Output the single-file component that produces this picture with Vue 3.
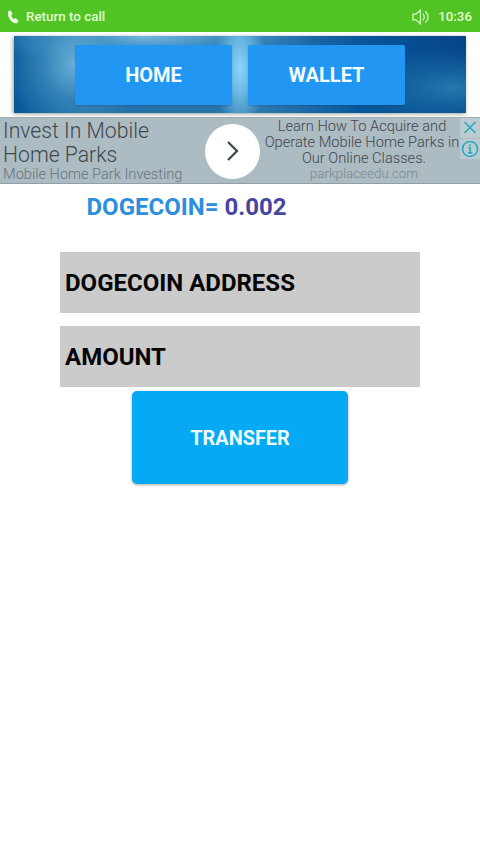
<script setup>
const tabs = ['HOME', 'WALLET']
const fields = ['DOGECOIN ADDRESS', 'AMOUNT']
</script>

<template>
  <div class="screen">
    <header class="status">
      <svg class="phone" viewBox="0 0 12 14"><path d="M1.2 1.2 3.8.4 5.5 4 4.2 5.4Q4.9 7.5 6.8 8.9L8.5 8.1 11.5 10.5 10.4 13.1Q6.8 14.2 3.6 10.6.1 6 1.2 1.2Z" /></svg>
      <span class="call">Return to call</span>
      <svg class="sound" viewBox="0 0 18 16"><path d="M1 5.3H3.7L8.4 1.2V14.8L3.7 10.7H1ZM11 4.7Q13.4 8 11 11.3M13.3 2.3Q19 8 13.3 13.7" /></svg>
      <span class="clock">10:36</span>
    </header>

    <nav class="banner">
      <button v-for="tab in tabs" :key="tab" class="tab">{{ tab }}</button>
    </nav>

    <section class="ad">
      <div class="ad-left">
        <div class="ad-title">Invest In Mobile<br />Home Parks</div>
        <div class="ad-sub">Mobile Home Park Investing</div>
      </div>
      <div class="arrow">
        <svg viewBox="0 0 14 22"><path d="M2 2 11 11 2 20" /></svg>
      </div>
      <div class="ad-right">
        <div>Learn How To Acquire and</div>
        <div>Operate Mobile Home Parks in</div>
        <div class="last">Our Online Classes.</div>
        <div class="url">parkplaceedu.com</div>
      </div>
      <div class="ad-marks">
        <svg viewBox="0 0 20 20"><path d="M4.5 4 15.5 15M15.5 4 4.5 15" /></svg>
        <svg viewBox="0 0 20 20"><circle cx="10" cy="10" r="7.5" /><path d="M8.5 8.8H10.2V13.7M8 13.9H12.3" /><path d="M10 5.3V7" /></svg>
      </div>
    </section>

    <main>
      <div class="balance">DOGECOIN= <span>0.002</span></div>
      <div v-for="field in fields" :key="field" class="field">{{ field }}</div>
      <button class="transfer">TRANSFER</button>
    </main>
  </div>
</template>

<style>
body {
  background: #fff;
}
</style>

<style scoped>
.screen {
  width: 480px;
  height: 854px;
  overflow: hidden;
  background: #fff;
  font-family: Roboto, "Liberation Sans", sans-serif;
}
button {
  border: 0;
  padding: 0;
  font-family: inherit;
}
svg {
  display: block;
  fill: none;
}
.status {
  display: flex;
  align-items: center;
  height: 32px;
  box-sizing: border-box;
  padding: 1px 8px 0 7px;
  background: #52c325;
  color: #e1fbd0;
  font-size: 13.4px;
  font-weight: 500;
  white-space: nowrap;
}
.phone {
  width: 12px;
  height: 14px;
  fill: #e9ffdf;
  margin-right: 7px;
}
.call {
  flex: 1;
}
.sound {
  width: 18px;
  height: 16px;
  stroke: #c9f5ae;
  stroke-width: 1.4;
  margin-right: 8px;
}
.clock {
  font-size: 13.3px;
}
.banner {
  display: flex;
  gap: 16px;
  width: 452px;
  height: 77px;
  box-sizing: border-box;
  margin: 4px 0 0 14px;
  padding: 9px 0 0 61px;
  background:
    radial-gradient(ellipse 26px 62px at 226px 33px, #8dd5fb 0%, #76c3edcc 45%, #4595c900 100%),
    radial-gradient(ellipse 70px 75px at 62px 28px, #6bb1d9 0%, #4796c499 48%, #1c6ca300 100%),
    radial-gradient(ellipse 170px 30px at 130px 0, #73b9df 0%, #4c9acb88 50%, #1c6ca300 100%),
    radial-gradient(ellipse 110px 40px at 440px 52px, #2478ad 0%, #1b70a899 45%, #0b559600 100%),
    linear-gradient(90deg, #07589a 0%, #226fa9 22%, #2b78b0 55%, #07559a 78%, #064488 100%);
  box-shadow: -1px 1px 4px #0006;
}
.tab {
  width: 157px;
  height: 60px;
  border-radius: 2px;
  background: #2196f3;
  color: #f3fcff;
  font-size: 20px;
  font-weight: 700;
  line-height: 60px;
  box-shadow: 0 1px 2px #0002;
}
.ad {
  display: flex;
  width: 480px;
  height: 67px;
  box-sizing: border-box;
  margin-top: 4px;
  border-top: 1px solid #a0abb0;
  border-bottom: 1px solid #929fa5;
  background: #adbbc2;
  color: #3e484d;
  font-weight: 300;
  white-space: nowrap;
}
.ad-left {
  width: 202px;
  padding-left: 3px;
}
.ad-title {
  padding-top: 1px;
  font-size: 21.2px;
  line-height: 24px;
}
.ad-sub {
  color: #65747c;
  font-size: 14.6px;
  line-height: 14px;
}
.arrow {
  display: flex;
  align-items: center;
  justify-content: center;
  width: 55px;
  height: 55px;
  margin-top: 6px;
  border-radius: 50%;
  background: #fff;
}
.arrow svg {
  width: 14px;
  height: 22px;
  margin-top: -1px;
  stroke: #414b50;
  stroke-width: 2.3;
}
.ad-right {
  width: 200px;
  margin: 0 -2px 0 2px;
  box-sizing: border-box;
  text-align: center;
  font-size: 14.65px;
  line-height: 16px;
}
.last {
  padding-left: 4px;
}
.url {
  padding-left: 4px;
  color: #7b898f;
  font-size: 13.4px;
  line-height: 15px;
}
.ad-marks {
  width: 20px;
}
.ad-marks svg {
  width: 20px;
  height: 20px;
  margin-bottom: 1px;
  background: #bccbd1;
  stroke: #27a9bd;
  stroke-width: 1.6;
}
main {
  display: flex;
  flex-direction: column;
  align-items: center;
}
.balance {
  width: 307px;
  height: 68px;
  box-sizing: border-box;
  padding-top: 1px;
  line-height: 44px;
  color: #2d8fdc;
  font-size: 24px;
  font-weight: 700;
}
.balance span {
  color: #45469f;
}
.field {
  width: 360px;
  height: 61px;
  box-sizing: border-box;
  padding: 1px 5px 0;
  margin-bottom: 13px;
  background: #cbcbcb;
  color: #050505;
  font-size: 24px;
  font-weight: 700;
  line-height: 61px;
}
.transfer {
  width: 216px;
  height: 93px;
  margin-top: -9px;
  padding-top: 1px;
  border-radius: 5px;
  background: #05a9f4;
  color: #effcff;
  font-size: 19.9px;
  font-weight: 700;
  box-shadow: 0 1px 3px #0005;
}
</style>
